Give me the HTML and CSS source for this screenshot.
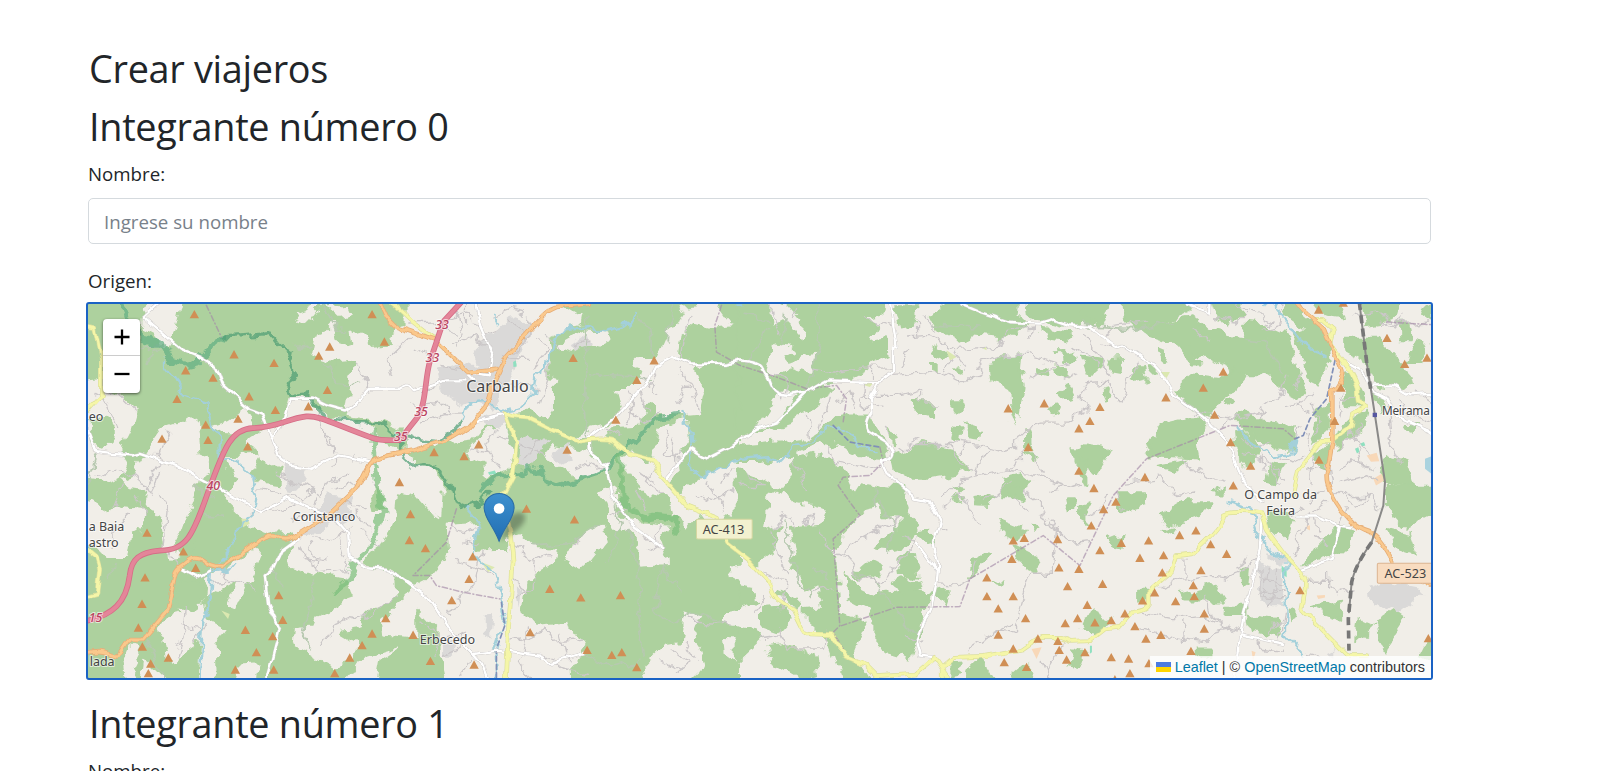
FILE: index.html
```html
<!DOCTYPE html>
<html lang="es">
<head>
    <meta charset="UTF-8">
    <meta name="viewport" content="width=device-width, initial-scale=1.0">
    <title>Crear viajeros</title>
    <link rel="stylesheet" href="styles.css">
</head>
<body>
    <div class="container">
        <h2>Crear viajeros</h2>
        <form>
            <h2>Integrante número 0</h2>
            <div class="form-group">
                <label for="nombre0">Nombre:</label>
                <input type="text" class="form-control" id="nombre0" placeholder="Ingrese su nombre">
            </div>
            <div class="form-group">
                <label>Origen:</label>
                <div class="map">
                    <svg class="map-canvas" viewBox="25 26 4028 1121" preserveAspectRatio="none">
                        <defs>
                            <linearGradient id="pin" x1="0" y1="0" x2="0" y2="1">
                                <stop offset="0" stop-color="#3d90cf"/>
                                <stop offset="1" stop-color="#226eb2"/>
                            </linearGradient>
                            <filter id="blur"><feGaussianBlur stdDeviation="8"/></filter>
                            <!-- roughens straight edges so they look surveyed -->
                            <filter id="rough" filterUnits="userSpaceOnUse" x="0" y="0" width="4080" height="1180">
                                <feTurbulence type="fractalNoise" baseFrequency="0.022" numOctaves="3" seed="4"/>
                                <feDisplacementMap in="SourceGraphic" scale="46" xChannelSelector="R" yChannelSelector="G"/>
                            </filter>
                            <filter id="wavy" filterUnits="userSpaceOnUse" x="0" y="0" width="4080" height="1180">
                                <feTurbulence type="fractalNoise" baseFrequency="0.025" numOctaves="2" seed="9"/>
                                <feDisplacementMap in="SourceGraphic" scale="22" xChannelSelector="R" yChannelSelector="G"/>
                            </filter>
                            <g id="motorway">
                                <path d="M15 977C100 960 140 920 150 840C155 790 180 770 240 765C320 765 340 720 385 590C430 470 450 400 520 398C600 395 620 370 680 363C720 360 760 385 880 428Q900 436 960 434L990 395L1010 370C1040 330 1035 250 1050 200L1070 140L1090 80L1145 20"/>
                            </g>
                            <g id="primary">
                                <path d="M15 1077Q40 1068 60 1070T115 1082L150 1030L190 1030L265 940L285 840Q290 820 310 810Q345 775 370 795T430 812L565 720Q580 715 600 726T640 725L750 655L830 580L860 520Q875 490 900 485L1000 465L1100 435L1160 400L1220 330L1235 280L1280 180L1390 60Q1405 45 1430 35L1530 25"/>
                                <path d="M900 20L920 65L950 95L1000 112L1065 132L1165 230L1250 220"/>
                                <path d="M3645 15L3670 50L3730 100Q3740 130 3765 170L3787 225Q3790 245 3757 290L3757 440L3740 540Q3740 600 3805 670Q3830 700 3875 712Q3900 725 3945 810L4060 870"/>
                            </g>
                            <g id="secondary">
                                <path d="M1275 350Q1290 362 1340 365L1400 395L1500 437Q1570 425 1600 435L1650 475L1720 495L1745 545L1820 630L1910 665L1940 740L2010 795L2070 860Q2070 900 2090 912L2140 945L2170 1005L2190 1018L2255 1020L2300 1085L2360 1110L2390 1140L2440 1137L2510 1132L2565 1085L2610 1150"/>
                                <path d="M2590 1150V1110L2620 1085L2710 1082L2830 1060L2880 1025H2940L2970 1037L3030 1035L3075 1000L3115 995L3155 950Q3210 945 3205 915V890L3275 830L3290 780L3335 775Q3400 720 3418 690T3430 655Q3460 640 3545 655L3560 705L3615 780Q3670 830 3675 850T3665 940L3805 1080H3860"/>
                                <path d="M1280 1150L1285 1020L1300 800L1290 700L1270 600L1300 540L1310 440L1275 350"/>
                                <path d="M3705 75H3730L3760 100L3750 140L3780 180Q3835 250 3835 290T3855 335L3820 355L3815 390L3755 435H3725L3655 530L3640 600"/>
                                <path d="M935 20L1000 80L1065 130"/>
                                <path d="M15 95L45 100L65 190V300L25 345M15 755L50 785L60 820L52 893L20 902"/>
                            </g>
                            <g id="tertiary">
                                <path d="M240 20L190 65L300 160L360 185L410 215L430 270L510 340L550 355L575 425L600 490L630 510L690 520L780 480L880 500"/>
                                <path d="M575 425L610 380L630 310L700 310L740 330L795 345L830 325L870 280L960 280L985 270L1000 285L1100 255H1160"/>
                                <path d="M20 400L48 470L100 475L160 480L180 475L300 515L400 570L545 650L625 607L700 640L770 670L805 710L810 785L860 815L920 820L960 845L1050 910L1110 1005L1180 1075L1210 1110L1225 1150"/>
                                <path d="M660 725L605 765L580 820L555 840L565 925L600 1000L560 1150M305 820L350 845L390 825"/>
                                <path d="M1190 20L1200 90L1240 180L1230 240L1160 230L1180 250M1180 377L1270 355"/>
                                <path d="M1530 440V425L1610 365L1710 250L1725 210L1780 182L1830 205H1940L1980 195Q2040 200 2050 220L2070 255Q2085 300 2130 298L2180 290L2240 255L2400 260L2440 230V155L2450 150L2430 20"/>
                                <path d="M1530 440V475L1580 510L1595 600L1660 690L1750 760M1755 555L1800 500L1830 460L1880 490L1960 450L2030 400L2090 380L2180 290"/>
                                <path d="M2400 260L2370 310L2375 350Q2350 385 2370 410L2420 440Q2460 490 2405 500L2420 530L2490 590L2500 612L2550 620L2580 680L2560 740L2575 810L2570 860L2555 930L2510 1040L2520 1080L2565 1085"/>
                                <path d="M2510 740L2570 820M2645 27L2700 50L2790 80L2880 85L2920 73L2970 90L3030 95L3110 155L3130 150L3220 210Q3260 250 3280 300L3370 365L3450 450L3485 550L3545 620M3320 27L3370 45L3388 55V25"/>
                                <path d="M3785 190L3850 230L3880 290L3920 310L3950 365L4055 410M3880 270L3940 270L3990 300L4055 295"/>
                                <path d="M3545 660L3540 760L3490 960L3470 1090L3460 1150M3485 1020L3615 1045M3650 660H3705L3780 690L3810 695M3780 690L3755 790L3660 825"/>
                                <path d="M1180 1075L1250 1065L1380 1080L1410 1100L1520 1070"/>
                            </g>
                        </defs>

                        <rect class="forest" x="0" y="0" width="4080" height="1180"/>
                        <g filter="url(#rough)">
                        <!-- land cover, west -->
                        <rect class="forest" x="0" y="0" width="2000" height="1180"/>
                        <g class="clearing">
                            <path d="M205 20L302 20L275 140L245 150L215 110L185 95L190 60z"/>
                            <path d="M0 250L70 245L82 300L115 300L165 345L150 400L125 450L128 480L140 500L110 565L60 550L0 540z"/>
                            <path d="M330 365L352 382L360 470L388 480L388 570L350 570L300 710L270 760L300 780L265 785L250 680L215 640L190 600L200 575L150 570L125 555L160 540L215 450L250 400L300 385z"/>
                            <path d="M405 395L450 380L490 350L518 360L508 385L470 412L430 410z"/>
                            <path d="M440 485L535 480L505 530L530 560L610 570L625 590L520 600L410 570L460 560z"/>
                            <path d="M745 35L795 30L820 65L790 72z"/>
                            <path d="M712 118L735 110L760 85L770 145L815 160L820 192L735 200L700 185z"/>
                            <path d="M645 60L700 40L730 27L690 80z"/>
                            <path d="M815 95L850 120L905 170L950 150L935 130L950 100L1000 90L1000 400L960 400L900 375L800 362L810 300L800 260L815 230L820 150z"/>
                            <path d="M500 440L560 400L610 390L630 308L700 308L715 345L790 375L870 390L900 440L970 470L1000 480V600L950 590L945 640L900 750L860 780L840 805L940 835L945 900L900 940H850V990L790 1000L780 1010L830 1040L820 1090L760 1110L690 1070L642 1040L645 1000L700 995L710 970L800 930L820 900L805 850L700 835L635 815L630 760L655 730L640 705L580 710L500 680L480 650L450 620L430 585H600L612 520L540 490L530 460z"/>
                            <path d="M0 610L45 620L95 650L130 635L195 640L190 690L150 720L140 785H75L60 760L0 760z"/>
                            <path d="M1010 890L950 940L905 970L910 1020L1010 1030z"/>
                            <path d="M800 1167L850 1085L950 1055L900 1090L885 1167z"/>
                            <path d="M385 845L450 810L530 763L545 780L520 840L490 865L458 940L448 925L480 845L420 880L380 910z"/>
                            <path d="M240 970L305 955L300 930L370 920L380 970L435 1000L405 1040L410 1170H355L365 1030L290 1080L265 1095L250 1020L232 990z"/>
                            <path d="M148 1050L180 1060L150 1120L170 1170H140L130 1090z"/>
                            <path d="M190 1095L220 1120L270 1170H180zM460 1170L480 1115L530 1112L520 1170z"/>
                        </g>
                        <g class="forest">
                            <path d="M30 375L90 368L108 400L100 440L70 450L30 430zM760 200L820 195L800 300L740 295L760 250zM870 600L900 580L910 640L880 650z"/>
                            <path d="M365 560L440 510L470 560L440 590L420 620L490 700L440 790L400 800L340 760z"/>
                            <path d="M290 860L350 840L370 900L345 940L300 940zM850 955l30 0 5 25-30 0z"/>
                        </g>

                        <!-- Carballo and the AC-413 valley -->
                        <g class="clearing" transform="translate(990 0)">
                            <path d="M-10 0H420L515 60L510 88L430 108L412 140L420 200L412 245L455 250L430 275L430 345L412 370L390 350L360 330L340 350L280 355L215 400L190 430L110 440L-10 460z"/>
                            <path d="M440 155L520 108L590 110L598 140L560 160L500 140L470 165z"/>
                            <path d="M170 470L240 400L290 385L310 440L290 520L230 545L230 500L180 485z"/>
                            <path d="M495 432L545 405L620 385L640 350L620 280L680 280L700 215L675 205L690 190L750 190L790 100L830 40L920 25L965 88L905 95L850 80L810 110L800 190L865 220L880 290L865 355L815 360L735 350V320L700 325L690 385L610 390L570 430z"/>
                            <path d="M405 480L430 450L540 470L590 520L500 545L450 520z"/>
                            <path d="M745 400L780 385L830 370L835 430L805 470L810 520L760 600L700 590L660 530L635 500L670 480L730 500z"/>
                            <path d="M-10 510L60 520L100 570L95 660L60 640L-10 560z"/>
                            <path d="M850 560L900 540L1000 480V660L940 650L930 690L870 650L800 600z"/>
                            <path d="M110 690L205 685L180 750L200 768L290 765L285 735L330 720L370 760L435 765L430 800L390 820L350 860L335 950L370 990L470 985L480 1020L530 1035L510 1085L475 1100L480 1170H115L95 1080V1010L20 930L-10 920V885L60 850L115 780z"/>
                            <path d="M480 750L580 690L585 730L545 780L505 820L470 800z"/>
                            <path d="M565 590L620 575L625 640L655 680L775 690L750 730L775 800L685 805L690 740L650 700H600L600 640z"/>
                            <path d="M690 560L775 570L860 650L830 690L790 660L780 610L740 590z"/>
                            <path d="M965 815L1010 810V865L975 855z"/>
                            <path d="M765 1050L815 1045L825 950L880 965L850 1010L880 1100L870 1125L820 1170H710L700 1110z"/>
                            <path d="M945 950L1010 940V990L945 980zM945 1030L970 1030L1000 1080V1110L950 1075z"/>
                        </g>
                        <g class="urban">
                            <path d="M1070 220L1150 195L1200 210L1180 170L1200 130L1240 120L1290 70L1320 60L1360 100L1320 170L1270 290L1230 340L1190 320L1150 330L1080 285z"/>
                            <path d="M1190 360L1280 340L1290 390L1250 400zM1315 460L1350 415L1405 440L1345 520L1310 500zM1470 150L1520 115L1530 150L1480 165zM1430 470L1460 445L1470 500L1440 510zM610 510L680 525L670 570L630 590zM740 600L820 605L800 680L740 690L660 730L690 690zM1215 960L1245 955L1240 1020L1215 1010zM1305 870L1325 880L1315 940zM1090 1030L1130 1040L1120 1080H1090z"/>
                        </g>

                        <!-- land cover, centre -->
                        <g class="clearing">
                            <path d="M1980 0H4100V1200H1980z"/>
                        </g>
                        <g class="forest" transform="translate(1980 0)">
                            <path d="M-10 0H450L435 50L380 65L415 85L385 135L445 125L450 180L400 200L370 230L330 250L240 260L290 290L240 330L190 350L150 380L60 410L-10 420z"/>
                            <path d="M-10 450L120 440L190 430L260 385L300 360L385 360L430 440L440 485L360 480L290 450L240 440L175 470L180 490L240 470L300 520L320 545L345 600L370 560L420 570L490 575L510 640L500 670L430 660L420 630L375 640L340 680L300 720L285 770L300 950L350 970L385 965L360 1020L340 1070L400 1170H320L275 1040L200 970L200 940L250 935L240 870L200 890L190 840L150 820L170 770L150 700L245 690L265 640L160 620L130 570L80 610L70 710L120 700L100 770L50 810L-10 770V520L40 540L120 590L150 550L160 480L60 500L-10 500z"/>
                            <path d="M465 35L530 35L520 95L480 100z"/>
                            <path d="M575 65L650 0H840L830 55L860 85L790 130L700 120L660 140L600 110zM860 0H1060V90L960 88L900 72L870 70zM905 100L1000 110L975 140L920 130z"/>
                            <path d="M750 225L785 182L845 180L840 230L852 270L840 360L812 360L808 280L755 250zM808 365L822 365L815 385z"/>
                            <path d="M518 305L545 305V320L580 320V362L520 345zM637 320h32v26h-32zM630 430L640 392L660 395L655 440zM680 390L725 405L720 430L680 425z"/>
                            <path d="M455 480L550 445L640 465L695 520L650 535L560 550L510 550L460 520zM450 400L475 430L455 460z"/>
                            <path d="M925 345L945 330L962 345L940 357zM895 215l25 0 3 28-25-8zM940 235l10-25 35 5-2 40-33-8zM950 170l50-5 10 30-30 0zM950 290l35-15 15 30-30 5zM1000 470h40v100l-30-60zM575 150L620 165L610 195L585 185zM855 410h15l5 60h-20zM845 485l55 0-20 15zM570 205l12 0 0 25-12-4zM640 225l20-10 15 12-15 10zM635 568l30 5-10 15zM790 550L850 535L880 560L835 600H780z"/>
                            <path d="M320 835L370 880L410 900L500 885L590 895L545 940L535 1010L510 1090L440 1070L415 1050L415 970L380 940L325 910z"/>
                            <path d="M405 760L440 720L510 660L540 690L500 755L460 765zM475 800L490 775L520 775L530 850L480 830zM345 830L385 795L425 815L410 845L360 850zM530 710l35-5 10 30-20 5zM455 860l45-15 45 30-40 20z"/>
                            <path d="M-10 870L45 880L50 920L-10 935zM60 940L130 935L150 970L115 1010L60 990zM80 1050L130 1045L225 1080L235 1130L180 1145L100 1100zM-10 990L40 1000L65 1030L-10 1100zM110 885l60 25 20 20-50-5z"/>
                            <path d="M780 670L830 690L855 720L820 735L795 720zM820 750L880 780L895 830L850 810zM790 590L850 570L845 605zM700 610L760 605L750 632L705 630zM645 595l25 10-5 20zM875 690l30 5-15 20zM975 605l30 0 5 30-30 0zM1020 630l20-10v60l-20-10zM700 790l20-20 40 5-10 15-60 50zM690 1120L720 1090L770 1170H680zM780 1170L860 1100L890 1170zM1000 1060L1035 1070L1020 1115L990 1110zM640 1105l25-2 5 30-30 5zM755 860l35 0-10 8zM590 890l40-10-15 50z"/>
                        </g>
                        <g class="clearing" transform="translate(1980 0)">
                            <path d="M90 20L145 35L190 85L185 120L165 100L130 65L95 85zM100 150L150 155L160 170L125 190L145 215L195 180L220 175L205 230L155 215L100 245L80 215zM130 280L170 300L120 360L80 400L60 385zM190 360L230 350L250 310L300 280L300 330L240 400L195 430z"/>
                        </g>

                        <!-- land cover, east -->
                        <g class="forest" transform="translate(3015 0)">
                            <path d="M-10 0H80L45 90L-10 65zM100 0H320L300 55L200 90L150 98L125 75z"/>
                            <path d="M170 95L250 78L320 65L380 110L470 125L480 85L530 90L610 125L630 200L655 290L640 310L600 290L540 240L470 240L380 200L300 155L200 120z"/>
                            <path d="M380 0H480L470 60L420 92L395 60zM590 0L640 35L730 110L740 190L700 265L670 250L640 150L620 115L665 100L610 60z"/>
                            <path d="M190 480L210 420L230 390L340 365L370 390L330 440L340 490L310 485zM270 290L330 240L410 250L440 225L475 240L400 330L380 370L340 350L290 310zM415 325l20-20 15 10-20 22zM275 150l40 5 35 50-30 0z"/>
                            <path d="M455 370L490 345L510 370L600 380L630 400L620 460L580 460L490 410zM450 400L510 420L520 470L500 520L455 480z"/>
                            <path d="M780 130H880L980 240L985 260L950 275L880 270L850 210L780 170zM970 200L1000 140L1025 145L1000 200zM945 85h28l8 50h-36zM820 0H950L930 75L840 90zM670 0h90l20 70-60-10zM1000 30h40v50l-30-20z"/>
                            <path d="M780 230L800 240L830 300V330L790 330zM800 370L850 340L840 380L800 410L760 470V410zM700 340L732 330V400L690 440L680 420zM690 470L730 460L720 520L690 500zM860 290l30 60 15-10-20-50zM960 385l40 0-20 30z"/>
                            <path d="M-10 180L50 190L60 225L10 240zM70 195L115 190L110 230L80 225zM145 215l30 0 5 40-40 10zM190 215l20 0 0 20-20 0zM900 480L960 500L980 570L890 560zM-10 440L60 450L75 480L40 530L-10 500zM215 510l90-15-40 35zM550 500L600 505L580 560L540 550zM225 165l25 10-5 25zM50 280l20-5-10 50z"/>
                            <path d="M905 570H1055V650L960 700L905 640zM910 700l60 15 20 60-60-20zM700 750L760 690L800 715L770 770L700 795L660 810zM1010 1080L1050 1000V1100z"/>
                            <path d="M420 930h62v35h-64zM490 960L560 970L595 1020L500 1000zM290 895L390 870L420 915L300 915zM20 940L85 970L20 1020L-10 1000zM60 730L120 718L110 760zM225 665L300 620L380 620L345 660L260 690zM550 660L600 640L622 670L600 740L560 700zM680 930L780 915L770 970L690 940zM870 980L930 940L960 960L920 1020L900 1080zM820 970L865 990L810 1040zM335 1055h42v28h-42zM470 820l20-5-5 50-15 10zM610 940l25-10 0 40-20 10zM100 590l90 0-40 60-45-10zM235 700l45-5-15 18zM150 885l35 0 0 30-35 0zM380 590l40-15 0 20z"/>
                        </g>
                        <g class="urban">
                            <path d="M3530 830L3550 800L3615 830L3600 900L3615 930L3540 915zM3555 770L3620 780L3610 820zM3860 880L3920 860L4020 880L4030 890L3960 950L3870 920zM3740 1070L3760 1060V1080z"/>
                        </g>
                        </g>
                        <path class="farm" d="M2855 1060L2885 1055L2870 1090zM3860 480l30-8 8 25-25 2zM3880 550l25-15 8 20-25 15zM3710 900l25-2 0 8-20 4zM3680 690l10 0 0 15-10-5zM3515 1065l12 5-8 25z"/>
                        <path class="pool" d="M1300 200l8-5 3 18-10 2zM3825 460l10-5 4 14-8 5zM3840 445l12-5 4 10-10 3zM1225 530l20-5 5 10-22 3zM3605 810l15 15 0 20-14-10zM3030 1050l6 0 0 20-6 4z"/>
                        <path class="meadow" d="M425 945L450 955L445 970zM485 670l20 0 5 15-20 10zM1205 800l40 15-20 15zM2600 165l30 20-20 10zM2700 155l20 0 0 10zM2340 265l40-2-10 12zM3240 230l30 0-10 18z"/>
                        <path class="lake" d="M4035 490L4060 480V540L4035 520z"/>

                        <!-- residential roads and tracks -->
                        <g filter="url(#rough)">
                        <g class="track">
                            <path d="M640 150L700 145M740 200L765 260L840 265M730 30L760 90L800 100M1990 60L2060 70M2000 210L2060 100M2120 50L2110 150M2210 30L2215 140L2180 280M1515 60V280L1520 430M1530 240L1700 250M1670 60L1710 110L1720 180M1780 30L1765 140M1640 700L1680 830L1675 930L1690 1080M1750 800L1720 950L1740 975L1800 970L1830 950L1940 980M1350 750L1460 745L1560 690M1600 590L1630 680L1590 790M1750 820L1800 895M1520 1080L1600 1120L1680 1090M100 810L90 850M200 1030L250 1150M340 570L400 610M370 660L440 662M570 820L620 870M690 850L705 900L670 1010L700 1060M3015 90L3150 100L3280 80M3490 130L3560 140L3610 230M2560 90L2700 95M60 460L20 580M180 160L250 140L190 210"/>
                            <path d="M2400 620L2440 690L2430 770M2330 820L2400 880L2500 1010M2380 570L2385 640M2210 820L2240 850M2110 680L2160 860L2200 900"/>
                        </g>
                        <g class="street">
                            <path d="M270 410L230 470L240 500L200 575L210 590L240 530M240 600L265 650L255 760L300 815M130 565L100 640M95 250L80 300M115 300L160 345M720 360L735 420L765 470L760 440L735 410M870 280L840 230L820 200M870 290L850 250M990 130L920 200L935 235M780 480L760 510M820 480V500M690 740L705 790L700 825M660 750L710 835L800 825L810 790M820 700L740 740L700 720M640 625L600 650L545 650M880 560L900 590M860 640L800 620M320 930L315 1000L290 1080M310 990L370 1000M340 1050L380 990M400 860L490 855L520 880M430 820L450 850M720 1050L760 990L850 950L870 970L950 900M870 940L850 960M840 700L900 760M530 640L510 660M540 580L600 595"/>
                            <path d="M990 80L1100 75L1180 60M1160 30V80M1110 150L1180 130L1230 150M1200 100L1170 60M1290 80L1330 110M1350 60V120L1310 170M1260 180L1340 190M1250 250L1370 280M1090 210L1150 220M1000 330L1080 320L1110 350M1020 380L1120 350L1160 350M1400 120L1440 160M1410 200L1400 260L1380 320M1240 400L1220 460L1260 520M1170 460L1230 470M1250 420L1300 430M1320 450L1400 480M1330 490L1380 430M1480 150L1530 130M1640 290L1660 330L1640 380M1680 290L1700 350M1720 230L1700 270M1800 220L1840 290L1860 350M1820 270L1790 330M1830 60L1800 180M1760 410L1750 480L1810 470M1680 530L1720 560M1670 580L1700 640M1110 700L1160 710L1200 690M1210 770L1190 860L1150 890L1110 950M1130 800L1190 820L1230 840M1310 750L1350 800L1410 780M1370 790L1360 870L1310 900M1310 850L1340 900M1300 1030L1350 1020L1400 1000L1420 1040L1510 1030M1400 1080L1450 1120L1520 1140M1100 1030L1160 1010M1090 1080L1150 1050V1010M1470 750L1500 730M1690 720L1730 750L1700 770M1740 690L1720 740M1780 1060L1830 1100L1790 1130M1820 1040L1850 1090M1830 960L1850 980L1960 985"/>
                            <path d="M2070 30L2100 120M2150 40L2140 70M2080 240L2120 260L2110 310M2190 220L2260 230L2350 215H2440M2350 260V340L2400 335M2330 340L2310 290L2270 320M2378 215V255M2350 300H2390M2440 90L2380 75L2360 70M2470 125L2550 120L2620 160L2760 150L2790 100L2870 95L2850 120M2510 80V120M2440 240L2570 230L2640 265L2700 235L2690 210L2780 180L2850 180L2930 205L2980 200M2660 215L2620 165M2390 300L2450 300L2525 280V320H2570M3020 260L3000 310L3020 330L2970 380L2890 380L2810 430V460L2770 470L2700 450L2600 440L2640 500L2690 520M2690 540L2700 500L2740 470M2460 460L2500 450H2600M2520 430L2480 450M2420 390L2430 420M2590 600L2640 550L2720 535L2790 520L2850 530L2900 550L2960 570M2830 470L2800 520M2250 450L2260 500L2400 525M2180 360L2190 430M2240 310L2220 400M2140 500L2180 580M2000 530L2040 570M1990 570H2050M2080 710L2100 800L2130 840M2100 670L2130 660L2150 700M2090 700L2110 660M2200 690L2190 650L2180 690M2230 700L2240 760L2280 780L2330 740L2460 670M2290 780L2350 850L2400 870L2520 730M2460 710L2510 740M2590 640L2640 590L2680 670L2700 680M2590 690L2610 700M2580 865L2640 870L2670 850L2690 790M2050 830L2120 860L2100 940M2200 890L2260 880M2100 1000L2130 1060L2240 1060L2250 1010M2040 1030L2110 1020M2060 900L2020 950M2480 1020L2530 1040M2660 1060L2720 1020L2800 980M2750 1000L2810 1015V980L2830 910L2860 830L2920 830L2930 700L2960 730M2830 590L2870 620L2920 700L2980 740L3030 735M2720 620L2790 560M2890 1100L2910 1150M2960 1030L2900 1130"/>
                            <path d="M3015 265L3090 260L3100 290L3130 320L3140 260L3180 200M3020 120L3060 180L3090 240M3060 140L3110 160M3070 110L3100 100M3100 90L3200 80M3480 30L3580 80L3560 90M3610 30L3600 90L3540 110M3410 70L3470 80L3500 50M3340 350L3480 370L3560 350M3555 340L3540 370M3440 360L3430 390M3300 490L3380 550L3430 560M3130 560L3250 550L3290 600L3350 590M3640 270L3660 230M3650 340L3680 300L3700 290M3620 340L3650 330L3690 350M3660 400L3640 440M3490 480L3560 500L3600 570M3540 450L3550 520M3600 480L3640 500L3680 480M3680 420L3700 480L3690 570M3680 530L3730 520M3780 300L3830 310M3790 290L3780 370M3840 380L3780 470M3810 400L3830 440M3770 520L3820 490L3880 520M3790 560L3860 540L3890 560M3800 600L3870 600L3830 630L3790 600M3840 450L3870 480M3930 310L3940 400L3930 440L3960 510M4000 290L4055 320M3820 60L3900 50L3940 90M3980 60L3940 100L3900 80M3900 90L4040 80"/>
                            <path d="M3015 660L3060 640L3080 600M3110 590L3130 640M3240 880L3310 850L3390 840L3450 850L3480 830L3540 790M3315 790V850M3500 780L3480 820M3190 950L3290 970L3360 960L3450 1000L3400 1010L3370 1040L3290 1030L3260 1020L3180 1000M3315 980L3310 1040M3380 900L3390 960L3440 1000M3450 1000L3480 1010M3540 800V900L3610 910M3560 800L3550 910M3530 850L3610 865M3530 880L3610 890M3590 820L3580 930M3610 950L3600 1040M3530 1020L3540 1060L3610 1070M3680 860L3750 860M3740 820V880L3770 900L3810 880M3700 660L3710 700M3690 660L3670 710M3630 660L3670 640M3660 700L3640 780M3700 650L3740 620M3800 640L3780 690M3680 1070L3720 1080"/>
                            <!-- short connections between the hamlets -->
                            <path d="M1010 160L1060 190M1130 40L1150 110L1120 170M1080 90L1130 110M1030 300L1070 260M1240 60L1290 40L1340 50M1250 110L1200 130M1370 130L1400 170L1360 220M1580 400L1620 420M1650 350L1690 380L1740 350M1690 250L1740 290M1480 520L1530 500L1580 530M1640 640L1600 660M1780 440L1790 500M1730 520L1700 560L1750 600M1850 600L1900 620L1960 580M1880 560L1930 640M1960 520L1920 560M1140 730L1200 740M1030 980L1080 1020L1060 1070M1170 1100L1140 1140M1320 1090L1350 1140M1340 1000L1330 1080M1440 1010L1460 1090M1750 1090L1800 1120M660 560L720 600L740 560L800 540M700 600L690 660L640 680M760 580L840 560M820 640L870 700M780 720L800 780M670 780L730 790M590 540L650 560M620 600L660 610L700 580M50 540L110 520L200 560M150 660L110 700L100 760M170 600L200 650M40 300L90 330L120 400M2540 60L2570 110M2480 160L2460 210M2620 190L2590 230M2840 250L2920 220M2970 150L3020 170L3060 220M2990 240L2950 260M2860 480L2890 530M2910 590L3000 560M2840 640L2800 600M2640 470L2670 440M3340 100L3380 130M3480 420L3520 460L3570 440M3580 520L3620 560M3560 330L3600 300L3620 240M3700 320L3720 380L3700 420M3820 420L3850 510M3860 590L3900 640M3740 500L3750 570L3790 610M3700 720L3740 740M3600 980L3570 1010M3730 580L3690 620M4000 360L4050 380M3960 310L3990 350"/>
                        </g>
                        </g>

                        <!-- rivers -->
                        <g class="river" filter="url(#rough)">
                            <path d="M250 190V215L310 295L385 320L400 380L420 440V490L460 490L520 540L535 600L525 650L490 680L460 750L400 820L395 900L370 990L360 1150"/>
                            <path d="M400 825L470 815M1245 50L1255 90M1660 50L1640 90L1570 105L1530 95L1430 105L1400 210L1365 240L1355 300L1320 335L1270 345L1220 320L1170 325L1150 380M1160 635L1200 680L1180 740L1180 780L1240 830L1260 900L1275 980L1250 1060L1255 1150"/>
                            <path d="M1805 355L1830 400L1840 470L1830 510L1870 550L1900 530L1960 495L2070 485L2100 500L2140 450L2200 440L2250 385L2300 410L2340 455L2400 455M1990 30L1960 30M3565 27L3620 60V100L3660 130L3740 185M3470 390L3500 430L3540 460L3580 480L3630 470L3645 430M3440 620L3510 640L3530 700L3560 760L3620 790L3615 1010L3670 1080"/>
                        </g>
                        <path class="border-river" d="M3765 195L3740 310L3690 370L3670 420L3645 430M2260 390L2310 440L2400 455M1265 920L1275 990L1250 1060V1150"/>

                        <!-- protected area outline -->
                        <g filter="url(#rough)">
                        <path class="park" d="M120 20L140 45L150 80L190 130L240 140L270 190L320 208L350 200L400 145L430 125"/>
                        <path class="park park-thin" d="M430 125L500 120L570 115L600 155L625 170L645 220L620 270L640 300L690 295L720 330V350L750 370L820 380L900 385L960 430L975 490L1000 515L1040 510L1080 530L1110 590L1120 620L1160 635L1200 620L1230 585"/>
                        <path class="park park-thin" d="M980 440L1000 425L1100 435L1140 380"/>
                        <path class="park park-mid" d="M1200 590L1240 545L1330 535L1355 510L1390 550L1440 570L1560 530L1620 485L1660 440L1700 400L1720 370L1790 360"/>
                        <path class="park green-way" d="M880 410L875 450L890 540L910 650L880 750L830 790L800 860L760 890M1625 480L1630 620L1650 650L1700 670L1730 665L1780 670L1790 710"/>
                        </g>
                        <path class="boundary" d="M380 30L425 125M1925 30L1905 90L1910 170L1980 210L2090 245L2180 280L2270 270L2300 310L2290 380M2400 455L2410 500L2370 540L2290 545L2275 570L2310 620L2340 660L2260 730L2280 990L2260 1010L2290 1060M2285 990L2450 935L2640 933L2670 850L2890 720L3000 810L3100 600L3200 490L3450 390L3610 400L3645 430M1130 640L1100 740L1000 840L1050 840L1070 870L1150 890L1260 910M3920 80L4055 88"/>

                        <!-- main roads: wide casing first, fill over it -->
                        <g filter="url(#wavy)">
                            <use href="#tertiary" class="tertiary-case"/>
                            <use href="#tertiary" class="tertiary"/>
                            <use href="#secondary" class="secondary-case"/>
                            <use href="#secondary" class="secondary"/>
                            <use href="#primary" class="primary-case"/>
                            <use href="#primary" class="primary"/>
                        </g>
                        <use href="#motorway" class="motorway-case"/>
                        <use href="#motorway" class="motorway"/>
                        <path class="rail" d="M3838 20L3860 200L3885 360L3915 560L3910 630L3875 740"/>
                        <path class="rail-dash" d="M3838 20L3860 200L3872 280"/>
                        <path class="rail" d="M3875 740Q3825 810 3815 860L3807 950"/>
                        <path class="rail-dash" d="M3875 740Q3825 810 3815 860L3805 970L3807 1065"/>
                        <rect class="station" x="3878" y="352" width="13" height="13"/>

                        <!-- peaks -->
                        <g class="peak">
                            <path d="M344 44l14 25h-28zM463 164l14 25h-28zM583 190l14 25h-28zM318 212l14 25h-28zM400 234l14 25h-28zM292 298l14 25h-28zM508 290l14 25h-28zM587 331l14 25h-28zM475 357l14 25h-28zM378 375l14 25h-28zM385 421l14 25h-28zM247 417l14 25h-28zM504 440l14 25h-28zM686 320l14 25h-28zM743 271l14 25h-28zM717 168l14 25h-28zM750 141l14 25h-28zM877 44l14 25h-28zM914 126l14 25h-28zM959 547l14 25h-28z"/>
                            <path d="M202 699l14 25h-28zM311 755l14 25h-28zM348 804l14 25h-28zM196 833l14 25h-28zM187 912l14 25h-28zM176 983l14 25h-28zM188 1040l14 25h-28zM266 1073l14 25h-28zM213 1091l14 25h-28zM206 1120l14 25h-28zM597 886l14 25h-28zM609 960l14 25h-28zM497 990l14 25h-28zM579 1009l14 25h-28zM530 1057l14 25h-28zM467 1109l14 25h-28zM582 1109l14 25h-28zM765 1120l14 25h-28zM810 1073l14 25h-28zM847 1036l14 25h-28zM877 1001l14 25h-28zM918 955l14 25h-28zM1000 1005l14 25h-28zM992 643l14 25h-28zM989 721l14 25h-28z"/>
                            <path d="M1480 175l14 25h-28zM1723 182l14 25h-28zM1671 241l14 25h-28zM1608 360l14 25h-28zM1462 450l14 25h-28zM1197 434l14 25h-28zM1153 469l14 25h-28zM1063 457l14 25h-28zM1340 627l14 25h-28zM1484 659l14 25h-28zM1037 745l14 25h-28zM1179 770l14 25h-28zM1168 837l14 25h-28zM1116 901l14 25h-28zM1410 867l14 25h-28zM1503 893l14 25h-28zM1622 886l14 25h-28zM1351 997l14 25h-28zM1522 1050l14 25h-28zM1596 1065l14 25h-28zM1626 1057l14 25h-28zM1671 1102l14 25h-28zM1183 1094l14 25h-28zM1052 1083l14 25h-28z"/>
                            <path d="M2785 326l14 25h-28zM2893 311l14 25h-28zM2997 386l14 25h-28zM2845 442l14 25h-28zM2997 513l14 25h-28zM3030 364l14 25h-28zM3060 322l14 25h-28zM2800 722l14 25h-28zM2833 714l14 25h-28zM2933 718l14 25h-28zM2796 777l14 25h-28zM2937 803l14 25h-28zM2997 807l14 25h-28zM2721 833l14 25h-28zM2721 889l14 25h-28zM2800 889l14 25h-28zM2755 926l14 25h-28zM2837 955l14 25h-28zM2963 859l14 25h-28zM2956 970l14 25h-28zM2993 955l14 25h-28zM2755 1004l14 25h-28zM2800 1046l14 25h-28zM2874 1016l14 25h-28zM2934 1023l14 25h-28zM2938 1050l14 25h-28zM2773 1087l14 25h-28zM2840 1101l14 25h-28zM2960 1079l14 25h-28zM3015 1057l14 25h-28zM3022 915l14 25h-28z"/>
                            <path d="M3716 30l14 25h-28zM3790 12l14 22h-28zM3921 115l14 25h-28zM3974 193l14 25h-28zM4041 174l14 25h-28zM3430 216l14 25h-28zM3370 264l14 25h-28zM3258 293l14 25h-28zM3404 345l14 25h-28zM3452 427l14 25h-28zM3512 498l14 25h-28zM3460 557l14 25h-28zM3783 264l14 25h-28zM3764 364l14 25h-28zM3717 480l14 25h-28zM3195 532l14 25h-28zM3042 565l14 25h-28z"/>
                            <path d="M3108 606l14 25h-28zM3071 628l14 25h-28zM3034 677l14 25h-28zM3124 729l14 25h-28zM3060 751l14 25h-28zM3206 722l14 25h-28zM3299 706l14 25h-28zM3348 692l14 25h-28zM3392 733l14 25h-28zM3440 762l14 25h-28zM3180 774l14 25h-28zM3251 766l14 25h-28zM3247 818l14 25h-28zM3363 811l14 25h-28zM3068 852l14 25h-28zM3340 856l14 25h-28zM3224 878l14 25h-28zM3343 889l14 25h-28zM3188 902l14 25h-28zM3287 904l14 25h-28zM3373 941l14 25h-28zM3373 986l14 25h-28zM3135 941l14 25h-28zM3094 961l14 25h-28zM3045 968l14 25h-28zM3165 979l14 25h-28zM3198 1016l14 25h-28zM3243 1005l14 25h-28zM3333 1053l14 25h-28zM3094 1072l14 25h-28zM3146 1076l14 25h-28zM3207 1090l14 25h-28zM3150 1120l14 25h-28zM3105 1138l10 20h-20zM3660 871l14 25h-28zM4045 1015l14 25h-28z"/>
                        </g>

                        <!-- road shields and place names -->
                        <rect class="shield-yellow" x="1850" y="671" width="167" height="59" rx="4"/>
                        <rect class="shield-orange" x="3892" y="803" width="190" height="60" rx="4"/>
                        <text class="ref" x="1931" y="714">AC-413</text>
                        <text class="ref" x="3976" y="846">AC-523</text>
                        <text class="exit" x="1087" y="102">33</text>
                        <text class="exit" x="1058" y="199">33</text>
                        <text class="exit" x="1024" y="362">35</text>
                        <text class="exit" x="963" y="437">35</text>
                        <text class="exit" x="401" y="583">40</text>
                        <text class="exit place-start" x="27" y="978">15</text>
                        <text class="town" x="1253" y="291">Carballo</text>
                        <text class="place" x="733" y="677">Coristanco</text>
                        <text class="place" x="1103" y="1046">Erbecedo</text>
                        <text class="place" x="3602" y="610">O Campo da</text>
                        <text class="place" x="3602" y="658">Feira</text>
                        <text class="place place-start place-narrow" x="3906" y="360">Meirama</text>
                        <text class="place place-start" x="27" y="377">eo</text>
                        <text class="place place-start" x="27" y="706">a Baia</text>
                        <text class="place place-start" x="27" y="755">astro</text>
                        <text class="place place-start" x="30" y="1112">lada</text>

                        <!-- marker -->
                        <path class="marker-shadow" d="M1262 735L1290 660Q1325 640 1335 660Q1345 690 1262 735z"/>
                        <path class="marker" d="M1258 737C1240 690 1214 670 1213 637A45 43 0 0 1 1303 637C1302 670 1276 690 1258 737z"/>
                        <circle cx="1258" cy="639" r="16" fill="#fff"/>
                    </svg>
                    <div class="zoom-control">
                        <a class="zoom-in">
                            <svg viewBox="0 0 16 16"><path d="M8 0.5V15.5M0.5 8H15.5"/></svg>
                        </a>
                        <a class="zoom-out">
                            <svg viewBox="0 0 16 16"><path d="M0.5 8H15.5"/></svg>
                        </a>
                    </div>
                    <div class="attribution">
                        <svg class="flag" viewBox="0 0 15 10"><path fill="#4c7be1" d="M0 0h15v5H0z"/><path fill="#ffd500" d="M0 5h15v5H0z"/></svg>
                        <a>Leaflet</a> | © <a>OpenStreetMap</a> contributors
                    </div>
                </div>
            </div>
            <h2>Integrante número 1</h2>
            <div class="form-group">
                <label for="nombre1">Nombre:</label>
                <input type="text" class="form-control" id="nombre1" placeholder="Ingrese su nombre">
            </div>
        </form>
    </div>
</body>
</html>
```
FILE: styles.css
```css
* {
    box-sizing: border-box;
}
body {
    margin: 0;
    height: 771px;
    overflow: hidden;
    background-color: #fff;
    color: #212529;
    font-family: "Segoe UI", "Open Sans", "Noto Sans", sans-serif;
    font-size: 18.7px;
    line-height: 28.8px;
}
.container {
    width: 1431px;
    padding-top: 46px;
    padding-left: 88px;
}
h2 {
    margin: 0 0 11.5px 1px;
    font-size: 37.8px;
    font-weight: 400;
    line-height: 46px;
    letter-spacing: -0.3px;
}
form h2 {
    margin-bottom: 10.5px;
}
label {
    display: block;
    margin-bottom: 9.6px;
}
.form-group {
    margin-bottom: 23px;
}
.form-control {
    display: block;
    width: 100%;
    height: 46px;
    padding: 7px 15px;
    border: 1px solid #d5dade;
    border-radius: 5px;
    font: inherit;
}
.form-control::placeholder {
    color: #78818a;
    opacity: 1;
}
.map {
    position: relative;
    height: 374px;
    margin-top: -2px;
    background-color: #ddd;
    outline: 2px solid #1a62c4;
    border-radius: 1px;
}
.map-canvas {
    display: block;
    width: 100%;
    height: 100%;
}

/* land cover */
.forest {
    fill: #add19e;
    stroke: #add19e;
    stroke-width: 5;
    stroke-linejoin: round;
}
.clearing {
    fill: #f1eee8;
    stroke: #f1eee8;
    stroke-width: 5;
    stroke-linejoin: round;
}
.urban {
    fill: #dad9d8;
}
.farm {
    fill: #f8d8b8;
}
.pool {
    fill: #8fe0c0;
}
.meadow {
    fill: #dbe8b0;
}
.lake {
    fill: #aad3df;
}

/* lines */
.track, .street, .river, .park, .boundary, .border-river, .rail, .rail-dash,
.tertiary, .tertiary-case, .secondary, .secondary-case,
.primary, .primary-case, .motorway, .motorway-case {
    fill: none;
    stroke-linejoin: round;
    stroke-linecap: round;
}
.track {
    stroke: #b7c9b0;
    stroke-width: 5;
}
.street {
    stroke: #cbc7c8;
    stroke-width: 4;
}
.river {
    stroke: #a3d0da;
    stroke-width: 7;
}
.border-river {
    stroke: #8090b8;
    stroke-width: 5;
    stroke-dasharray: 14 10;
}
.park {
    stroke: #5fae83;
    stroke-width: 18;
    stroke-opacity: 0.7;
}
.park-thin {
    stroke: #4d9c74;
    stroke-width: 10;
}
.park-mid {
    stroke-width: 14;
}
.green-way {
    stroke: #7abf7a;
    stroke-width: 15;
}
.boundary {
    stroke: #a58aa8;
    stroke-width: 4.5;
    stroke-dasharray: 16 8 3 8;
    stroke-opacity: 0.65;
}
.tertiary-case {
    stroke: #cfcccb;
    stroke-width: 10;
}
.tertiary {
    stroke: #fff;
    stroke-width: 7;
}
.secondary-case {
    stroke: #dcdf9c;
    stroke-width: 14;
}
.secondary {
    stroke: #f5f6a8;
    stroke-width: 10;
}
.primary-case {
    stroke: #e6ae78;
    stroke-width: 14;
}
.primary {
    stroke: #fac88c;
    stroke-width: 9;
}
.motorway-case {
    stroke: #d66d87;
    stroke-width: 17;
}
.motorway {
    stroke: #e48599;
    stroke-width: 12;
}
.rail {
    stroke: #8a8988;
    stroke-width: 6;
}
.rail-dash {
    stroke: #777;
    stroke-width: 11;
    stroke-linecap: butt;
    stroke-dasharray: 24 16;
}
.station {
    fill: #5656a0;
}
.peak {
    fill: #d08f55;
}

/* labels */
.map-canvas text {
    font-family: "Noto Sans", sans-serif;
    text-anchor: middle;
    paint-order: stroke;
    stroke: rgba(255, 255, 255, 0.65);
    stroke-width: 6;
    stroke-linejoin: round;
    fill: #444;
}
.map-canvas .town {
    font-size: 48px;
}
.map-canvas .place {
    font-size: 37.5px;
}
.map-canvas .place-start {
    text-anchor: start;
}
.map-canvas .place-narrow {
    font-size: 35.5px;
    letter-spacing: -0.8px;
}
.map-canvas .ref {
    font-size: 38px;
    stroke: none;
}
.map-canvas .exit {
    font-size: 37px;
    font-style: italic;
    font-weight: 500;
    fill: #b9425f;
}
.shield-yellow {
    fill: #f2f1cf;
    stroke: #d5d6a0;
    stroke-width: 3;
}
.shield-orange {
    fill: #f8dcc0;
    stroke: #dcb490;
    stroke-width: 3;
}

.marker {
    fill: url(#pin);
    stroke: #2a6ca6;
    stroke-width: 3;
}
.marker-shadow {
    fill: #000;
    opacity: 0.3;
    filter: url(#blur);
}

.zoom-control {
    position: absolute;
    top: 15px;
    left: 15px;
    width: 37px;
    background-color: #fff;
    border-radius: 4px;
    box-shadow: 0 1px 3px rgba(0, 0, 0, 0.6);
}
.zoom-control a {
    display: flex;
    align-items: center;
    justify-content: center;
    height: 37px;
}
.zoom-control svg {
    width: 16px;
    height: 16px;
    fill: none;
    stroke: #000;
    stroke-width: 2.3;
}
.zoom-in {
    border-bottom: 1px solid #ccc;
}
.attribution {
    position: absolute;
    right: 0;
    bottom: 0;
    padding: 0 6px;
    background-color: rgba(255, 255, 255, 0.8);
    color: #333;
    font-family: "Liberation Sans", Arial, sans-serif;
    font-size: 14.4px;
    line-height: 22px;
    white-space: nowrap;
}
.attribution a {
    color: #0078a8;
}
.flag {
    width: 15px;
    height: 10px;
}
```
